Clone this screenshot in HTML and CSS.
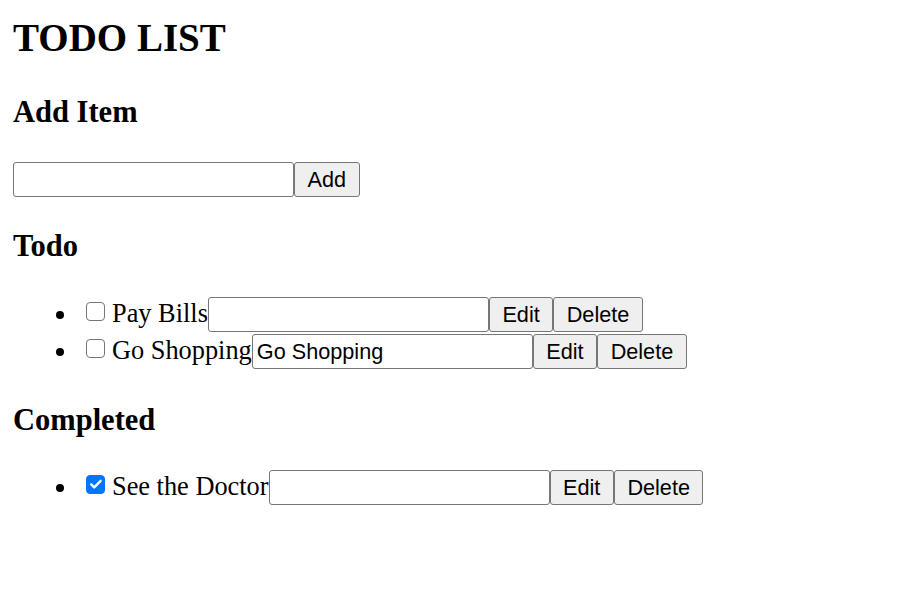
FILE: index.html
```html
<!DOCTYPE html>
<html lang="en">
<head>
  <meta charset="UTF-8" />
  <meta name="viewport" content="width=device-width, initial-scale=1" />
  <title>Todo List</title>
  <link rel="stylesheet" href="styles.css">
</head>
<body>
  <h1 class="page-title">TODO LIST</h1>

  <h3 class="section-title">Add Item</h3>
  <div class="add-row"><input type="text" class="text-field" id="new-task"><button class="btn">Add</button></div>

  <h3 class="section-title">Todo</h3>
  <ul class="task-list" id="incomplete-tasks">
    <li class="task"><input type="checkbox" class="task-check"><label class="task-label">Pay Bills</label><input type="text" class="text-field"><button class="btn">Edit</button><button class="btn">Delete</button></li>
    <li class="task"><input type="checkbox" class="task-check"><label class="task-label">Go Shopping</label><input type="text" class="text-field" value="Go Shopping"><button class="btn">Edit</button><button class="btn">Delete</button></li>
  </ul>

  <h3 class="section-title">Completed</h3>
  <ul class="task-list done-list" id="completed-tasks">
    <li class="task"><input type="checkbox" class="task-check" checked><label class="task-label">See the Doctor</label><input type="text" class="text-field"><button class="btn">Edit</button><button class="btn">Delete</button></li>
  </ul>
</body>
</html>
```

FILE: styles.css
```css
body {
  margin: 0 13px;
  font-family: "Liberation Serif", "Times New Roman", serif;
  font-size: 26px;
  color: #000;
  background: #fff;
}
.page-title {
  font-size: 39px;
  line-height: 46px;
  margin: 15px 0 34px;
}
.section-title {
  font-size: 30.5px;
  line-height: 35px;
  margin: 32px 0;
}
.add-row {
  height: 35px;
}
.text-field {
  box-sizing: border-box;
  width: 281px;
  height: 35px;
  padding: 0 4px;
  margin: 0;
  border: 1px solid #767676;
  border-radius: 3px;
  font-family: "Liberation Sans", Arial, sans-serif;
  font-size: 21.67px;
  color: #000;
  background: #fff;
  vertical-align: baseline;
}
.btn {
  box-sizing: border-box;
  height: 35px;
  padding: 0 12.5px;
  margin: 0;
  border: 1px solid #767676;
  border-radius: 3px;
  background: #efefef;
  font-family: "Liberation Sans", Arial, sans-serif;
  font-size: 21.67px;
  color: #000;
  vertical-align: baseline;
}
.task-list {
  margin: 33px 0 31px;
  padding-left: 65px;
}
.done-list {
  margin-top: 31px;
}
.task {
  height: 37px;
  font-size: 26.35px;
}
.task-check {
  appearance: none;
  box-sizing: border-box;
  width: 19px;
  height: 19px;
  margin: 0 7px 1px 8px;
  border: 1.5px solid #767676;
  border-radius: 4px;
  background: #fff;
  vertical-align: baseline;
}
.task-check:checked {
  border-color: #0075ff;
  background: #0075ff url("data:image/svg+xml,%3Csvg xmlns='http://www.w3.org/2000/svg' viewBox='0 0 16 16'%3E%3Cpath d='M3.2 8.4l3 3 6.4-6.6' fill='none' stroke='%23fff' stroke-width='2.4' stroke-linecap='round' stroke-linejoin='round'/%3E%3C/svg%3E") center / 16px 16px no-repeat;
}
```
